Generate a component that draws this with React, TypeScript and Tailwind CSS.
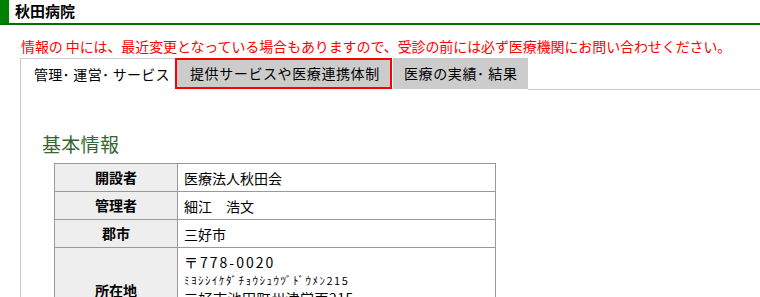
const jp = "font-['Noto_Sans_CJK_JP','Noto_Sans',sans-serif]";

const rows: { label: string; value: string }[] = [
  { label: "開設者", value: "医療法人秋田会" },
  { label: "管理者", value: "細江　浩文" },
  { label: "郡市", value: "三好市" },
];

export default function App() {
  return (
    <div className={`w-[760px] h-[297px] overflow-hidden bg-white text-black ${jp}`}>
      {/* header */}
      <div className="flex h-[25px] border-b-2 border-[#006e00]">
        <div className="w-[9px] bg-[#008000]" />
        <div className="pl-[6px] text-[15px] font-bold leading-[22px]">秋田病院</div>
      </div>

      {/* notice */}
      <div className="mt-[11px] pl-[21px] text-[14px] leading-[20px] tracking-[-0.1px] text-[#ff0000] whitespace-nowrap">
        情報の 中には、最近変更となっている場合もありますので、受診の前には必ず医療機関にお問い合わせください。
      </div>

      {/* tabs */}
      <div className="mt-[2px] ml-[20px] flex h-[32px] text-[14px]">
        <div className="w-[155px] border-l border-t border-[#cccccc] bg-white pl-[13px] leading-[30px] tracking-[0.3px]">
          管理･ 運営･ サービス
        </div>
        <div className="w-[217px] h-[31px] border-2 border-[#ff0000] bg-[#cccccc] pl-[13px] leading-[27px] tracking-[0.6px]">
          提供サービスや医療連携体制
        </div>
        <div className="ml-[1px] w-[135px] h-[31px] bg-[#cccccc] pl-[11px] leading-[31px] tracking-[0.6px]">
          医療の実績･ 結果
        </div>
        <div className="flex-1 h-[32px] border-b border-[#cccccc]" />
      </div>

      {/* panel */}
      <div className="ml-[20px] border-l border-[#cccccc] pt-[42px] pl-[21px] h-[400px]">
        <h2 className="text-[19px] leading-[24px] tracking-[0.3px] text-[#336633]">基本情報</h2>
        <table className="mt-[7px] ml-[12px] w-[442px] border-collapse text-[14px]">
          <tbody>
            {rows.map((r) => (
              <tr key={r.label} className="h-[28px]">
                <th className="w-[123px] border border-[#999999] bg-[#eeeeee] text-center font-bold">
                  {r.label}
                </th>
                <td className="border border-[#999999] pl-[6px] leading-[20px]">{r.value}</td>
              </tr>
            ))}
            <tr className="h-[86px]">
              <th className="w-[123px] border border-[#999999] bg-[#eeeeee] text-center font-bold">
                所在地
              </th>
              <td className="border border-[#999999] pl-[6px] pt-[5px] align-top">
                <div className="leading-[18px] tracking-[2px]">〒778-0020</div>
                <div className="text-[11px] leading-[18px] tracking-[1.5px]">ﾐﾖｼｼｲｹﾀﾞﾁｮｳｼｭｳﾂﾞﾄﾞｳﾒﾝ215</div>
                <div className="leading-[18px] tracking-[0.5px]">三好市池田町州津営面215</div>
              </td>
            </tr>
          </tbody>
        </table>
      </div>
    </div>
  );
}
